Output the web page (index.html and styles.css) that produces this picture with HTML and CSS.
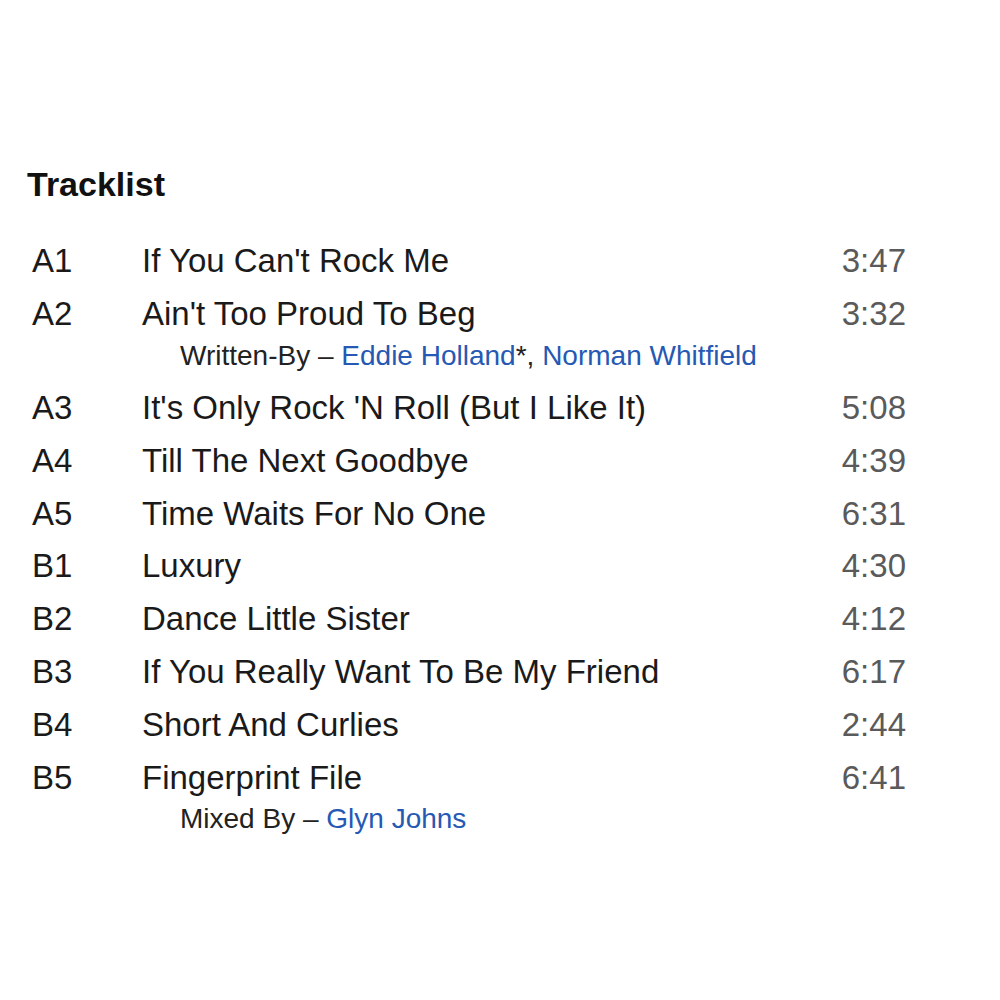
FILE: index.html
```html
<!DOCTYPE html>
<html>
<head>
<meta charset="utf-8">
<link rel="stylesheet" href="styles.css">
</head>
<body>
<section class="tracklist">
  <h2 class="heading">Tracklist</h2>
  <div class="tracks">
    <div class="track"><span class="pos">A1</span><span class="title">If You Can't Rock Me</span><span class="dur">3:47</span></div>
    <div class="track"><span class="pos">A2</span><span class="title">Ain't Too Proud To Beg</span><span class="dur">3:32</span></div>
    <div class="credit">Written-By – <a class="link">Eddie Holland</a>*, <a class="link">Norman Whitfield</a></div>
    <div class="track"><span class="pos">A3</span><span class="title">It's Only Rock 'N Roll (But I Like It)</span><span class="dur">5:08</span></div>
    <div class="track"><span class="pos">A4</span><span class="title">Till The Next Goodbye</span><span class="dur">4:39</span></div>
    <div class="track"><span class="pos">A5</span><span class="title">Time Waits For No One</span><span class="dur">6:31</span></div>
    <div class="track"><span class="pos">B1</span><span class="title">Luxury</span><span class="dur">4:30</span></div>
    <div class="track"><span class="pos">B2</span><span class="title">Dance Little Sister</span><span class="dur">4:12</span></div>
    <div class="track"><span class="pos">B3</span><span class="title">If You Really Want To Be My Friend</span><span class="dur">6:17</span></div>
    <div class="track"><span class="pos">B4</span><span class="title">Short And Curlies</span><span class="dur">2:44</span></div>
    <div class="track"><span class="pos">B5</span><span class="title">Fingerprint File</span><span class="dur">6:41</span></div>
    <div class="credit">Mixed By – <a class="link">Glyn Johns</a></div>
  </div>
</section>
</body>
</html>
```
FILE: styles.css
```css
html, body {
  margin: 0;
  padding: 0;
  background: #ffffff;
}
body {
  font-family: "Liberation Sans", Arial, Helvetica, sans-serif;
  color: #1a1a1a;
}
.tracklist {
  padding-top: 166px;
}
.heading {
  margin: 0;
  padding-left: 27px;
  font-size: 34px;
  line-height: 36px;
  font-weight: bold;
  color: #111;
}
.tracks {
  margin-top: 33px;
  padding-left: 32px;
  width: 874px;
}
.track {
  display: grid;
  grid-template-columns: 110px 1fr auto;
  font-size: 33px;
  line-height: 52.8px;
  white-space: nowrap;
}
.pos {
  color: #1a1a1a;
}
.title {
  color: #1a1a1a;
}
.dur {
  color: #5a5a5a;
  text-align: right;
}
.credit {
  padding-left: 148px;
  font-size: 28px;
  line-height: 29px;
  margin-bottom: 12.5px;
  color: #222;
  white-space: nowrap;
}
.link {
  color: #2659b3;
  text-decoration: none;
}
```
